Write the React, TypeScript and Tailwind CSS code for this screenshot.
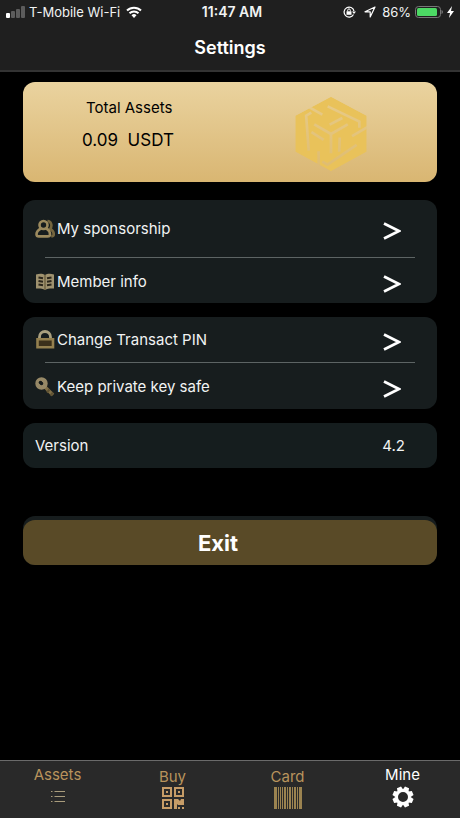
import type { ReactNode } from 'react';

const goldStroke = '#9c8a5e';

const PeopleIcon = () => (
  <svg viewBox="0 0 20 20" className="h-5 w-5" fill="none" stroke={goldStroke} strokeWidth="2.6">
    <path d="M12.500 2c3.600 0 5.200 4.800 2.600 8 2 1 3.700 2.800 3.700 5.300 0 1.200-.8 2-2.600 2" stroke="#75663f" />
    <circle cx="8.500" cy="6" r="4" />
    <path d="M6 9.400C3.400 11 1.500 12.600 1.500 15.200c0 1.600.8 2.200 2.500 2.200h8.500c1.700 0 2.500-.6 2.500-2.200 0-2.600-1.600-4.400-4-6" />
  </svg>
);

const BookIcon = () => (
  <svg viewBox="0 0 20 20" className="h-5 w-5">
    <path d="M1 2.500c3.500-1 7-.8 9 .5 2-1.300 5.500-1.500 9-.5v14c-3.500-.3-6.500 0-9 1.500-2.500-1.500-5.500-1.800-9-1.500z" fill="#9f926f" />
    <path d="M10 3v15" stroke="#6f6240" strokeWidth="1.500" />
    <path d="M3.500 5.500l4.500.8M3.500 9l4.500.8M3.500 12.500l4.500.8M16.500 5.500l-4.500.8M16.500 9l-4.500.8M16.500 12.500l-4.500.8" stroke="#2b261b" strokeWidth="2" />
  </svg>
);

const LockIcon = () => (
  <svg viewBox="0 0 20 20" className="h-5 w-5" fill="none">
    <path d="M4.500 10V7a5.500 5.500 0 0 1 11 0v3" stroke="#aaa07f" strokeWidth="2.800" />
    <path d="M2.500 9.300h15.500v8h-15.500z" stroke="#94804f" strokeWidth="2.600" fill="#3b301b" />
  </svg>
);

const KeyIcon = () => (
  <svg viewBox="0 0 20 20" className="h-5 w-5" fill="none">
    <path d="M9 9l9 9" stroke="#806f47" strokeWidth="3.600" />
    <path d="M14.500 12.500l-2.500 3M18 15.500l-2.500 3" stroke="#5f5233" strokeWidth="2" />
    <circle cx="6.500" cy="6.500" r="4" stroke="#978967" strokeWidth="4.400" />
    <circle cx="5.500" cy="5.500" r="1.800" fill="#171c1b" />
  </svg>
);

const CubeLogo = () => (
  <svg viewBox="0 0 220 228" className="h-[76px] w-[74px]" aria-hidden="true">
    <defs>
      <mask id="cube-gaps">
        <path d="M110 2l107 57v108l-107 59L3 167V59z" fill="#fff" />
        <g fill="none" stroke="#3c3c3c" strokeWidth="8">
          {[0, 120, 240].map((deg) => (
            <g key={deg} transform={`rotate(${deg} 110 114)`}>
              <path d="M110 114v58" />
              <path d="M100 31l95 46v18" />
              <path d="M24 22l60 34" />
              <path d="M106 86l38-20" />
            </g>
          ))}
        </g>
      </mask>
    </defs>
    <path d="M110 2l107 57v108l-107 59L3 167V59z" fill="#e9c25a" mask="url(#cube-gaps)" />
  </svg>
);

const SignalIcon = () => (
  <svg viewBox="0 0 19 12" className="h-3 w-[19px]">
    <rect x="0" y="7" width="4" height="5" rx="1" fill="#fff" />
    <rect x="5" y="5" width="4" height="7" rx="1" fill="#5c5c5c" />
    <rect x="10" y="3" width="4" height="9" rx="1" fill="#5c5c5c" />
    <rect x="15" y="0" width="4" height="12" rx="1" fill="#5c5c5c" />
  </svg>
);

const WifiIcon = () => (
  <svg viewBox="0 0 16 12" className="ml-0.5 h-3 w-4" fill="none" stroke="#fff" strokeWidth="2">
    <path d="M1 4.500a10 10 0 0 1 14 0M3.500 7.300a6.400 6.400 0 0 1 9 0" />
    <path d="M5.500 9.300a3.600 3.600 0 0 1 5 0L8 12z" fill="#fff" stroke="none" />
  </svg>
);

const StatusBar = () => (
  <div className="grid grid-cols-[1fr_auto_1fr] items-center px-1.5 pt-1 text-[13px] leading-4">
    <div className="flex items-center gap-1">
      <SignalIcon />
      <span>T-Mobile Wi-Fi</span>
      <WifiIcon />
    </div>
    <span className="pl-1 text-sm leading-4 font-semibold">11:47 AM</span>
    <div className="flex items-center justify-end gap-1">
      <svg viewBox="0 0 13 12" className="mr-1 h-3 w-[13px]" fill="none" stroke="#fff">
        <path d="M10.500 8.500a5 5 0 1 1 .5-3.500" strokeWidth="1.200" />
        <path d="M9 5.500h4L11 8z" fill="#fff" stroke="none" />
        <path d="M3.500 5.300h5v3.500h-5z" fill="#fff" stroke="none" />
        <path d="M4.700 5.500V4.200a1.300 1.300 0 0 1 2.600 0v1.300" />
      </svg>
      <svg viewBox="0 0 12 12" className="mr-0.5 h-3 w-3" fill="none" stroke="#fff" strokeWidth="1.200" strokeLinejoin="round">
        <path d="M11 1L1 5.800h5.200V11z" />
      </svg>
      <span>86%</span>
      <svg viewBox="0 0 28 12" className="h-3 w-7">
        <rect x="0.500" y="0.500" width="25" height="11" rx="3" fill="none" stroke="#777" />
        <rect x="2" y="2" width="20" height="8" rx="1.500" fill="#4cd964" />
        <path d="M26.500 4v4q1.500-.5 1.500-2t-1.500-2z" fill="#777" />
      </svg>
      <svg viewBox="0 0 7 12" className="h-3 w-[7px]" fill="#fff">
        <path d="M5 0L0 7h3l-1 5 5-7H4z" />
      </svg>
    </div>
  </div>
);

const Chevron = () => (
  <svg viewBox="0 0 18 18" className="mt-1 h-[18px] w-[18px]" fill="none" stroke="#fff" strokeWidth="2.800">
    <path d="M1 1.500l15 7.500-15 7.500" />
  </svg>
);

const Row = ({ icon, label, className }: { icon: ReactNode; label: string; className: string }) => (
  <button type="button" className={`flex w-full items-center gap-0.5 pr-9 pl-3 text-left ${className}`}>
    {icon}
    <span className="flex-1">{label}</span>
    <Chevron />
  </button>
);

const Divider = () => <hr className="mx-[22px] border-t border-[#5d6464]" />;

const ListIcon = () => (
  <svg viewBox="0 0 14 12" className="h-3 w-3.5" stroke="#a99c7c">
    <path d="M0 .5h1.500M3.500 .5H14M0 5.500h1.500M3.500 5.500H14M0 10.500h1.500M3.500 10.500H14" />
  </svg>
);

const QrIcon = () => (
  <svg viewBox="0 0 22 22" className="h-[22px] w-[22px]" fill="#c69c67">
    <path fillRule="evenodd" d="M0 0h10v10H0zM2 2v6h6V2zM12 0h10v10H12zM14 2v6h6V2zM0 12h10v10H0zM2 14v6h6v-6z" />
    <path d="M4 4h2v2H4zM16 4h2v2h-2zM4 16h2v2H4zM12 12h4l2 2 1-2h3v6h-6l-1-1v5h-3zM16 20h2v2h-2zM20 20h2v2h-2z" />
  </svg>
);

const BarcodeIcon = () => (
  <svg viewBox="0 0 28 22" className="h-[22px] w-7" fill="#9b8350">
    <path d="M0 0h3v22H0zM4 0h1v22H4zM6 0h1v22H6zM8 0h1v22H8zM10 0h2v22h-2zM13 0h1v22h-1zM15 0h2v22h-2zM18 0h1v22h-1zM20 0h2v22h-2zM23 0h1v22h-1zM25 0h3v22h-3z" />
  </svg>
);

const GearIcon = () => (
  <svg viewBox="0 0 22 22" className="h-[22px] w-[22px]">
    <g fill="#fff">
      {[0, 45, 90, 135, 180, 225, 270, 315].map((deg) => (
        <path key={deg} d="M8 4l.8-3.500h4.400L14 4z" transform={`rotate(${deg + 22.5} 11 11)`} />
      ))}
    </g>
    <circle cx="11" cy="11" r="6.500" fill="none" stroke="#fff" strokeWidth="3" />
  </svg>
);

const tabs = [
  { label: 'Assets', icon: <ListIcon />, className: 'text-[#b8935c] gap-1.5 pt-1' },
  { label: 'Buy', icon: <QrIcon />, className: 'text-[#b8935c] pt-1.5' },
  { label: 'Card', icon: <BarcodeIcon />, className: 'text-[#b8935c] pt-1.5' },
  { label: 'Mine', icon: <GearIcon />, className: 'text-white pt-1 gap-px' },
];

const App = () => (
  <div className="flex min-h-screen flex-col bg-black font-['Inter','Liberation_Sans',sans-serif] text-[15px] leading-5 text-[#f1f3f3]">
    <header className="border-b-2 border-[#333] bg-[#1f1f1f] pb-2.5">
      <StatusBar />
      <h1 className="pt-4 text-center text-lg leading-6 font-semibold text-white">Settings</h1>
    </header>

    <main className="flex flex-1 flex-col px-[23px] pt-2.5">
      <section className="flex h-[100px] items-start justify-between rounded-xl bg-linear-to-b from-[#ead39f] to-[#d9b672] pr-[69px] pl-[59px] text-black">
        <div className="pt-4">
          <h2 className="px-1 leading-5">Total Assets</h2>
          <p className="pt-2.5 text-[17px] leading-6 whitespace-pre">0.09  USDT</p>
        </div>
        <div className="pt-3.5">
          <CubeLogo />
        </div>
      </section>

      <section className="mt-[18px] rounded-xl bg-[#171d1e]">
        <Row icon={<PeopleIcon />} label="My sponsorship" className="h-[57px]" />
        <Divider />
        <Row icon={<BookIcon />} label="Member info" className="h-[45px] pt-0.5" />
      </section>

      <section className="mt-3.5 rounded-xl bg-[#171d1e]">
        <Row icon={<LockIcon />} label="Change Transact PIN" className="h-[45px]" />
        <Divider />
        <Row icon={<KeyIcon />} label="Keep private key safe" className="h-[46px] pt-0.5" />
      </section>

      <section className="mt-3.5 flex h-[45px] items-center justify-between rounded-xl bg-[#151d1e] pr-8 pl-3">
        <span>Version</span>
        <span>4.2</span>
      </section>

      <div className="mt-12 rounded-xl bg-[#171d1e] pt-1">
        <button type="button" className="h-[45px] w-full rounded-xl bg-[#594a27] pr-6 text-[22px] font-bold text-white">
          Exit
        </button>
      </div>
    </main>

    <nav className="grid h-[58px] grid-cols-4 border-t border-[#6a6a6a] bg-[#292929]">
      {tabs.map((tab) => (
        <button key={tab.label} type="button" className={`flex flex-col items-center ${tab.className}`}>
          <span>{tab.label}</span>
          {tab.icon}
        </button>
      ))}
    </nav>
  </div>
);

export default App;
